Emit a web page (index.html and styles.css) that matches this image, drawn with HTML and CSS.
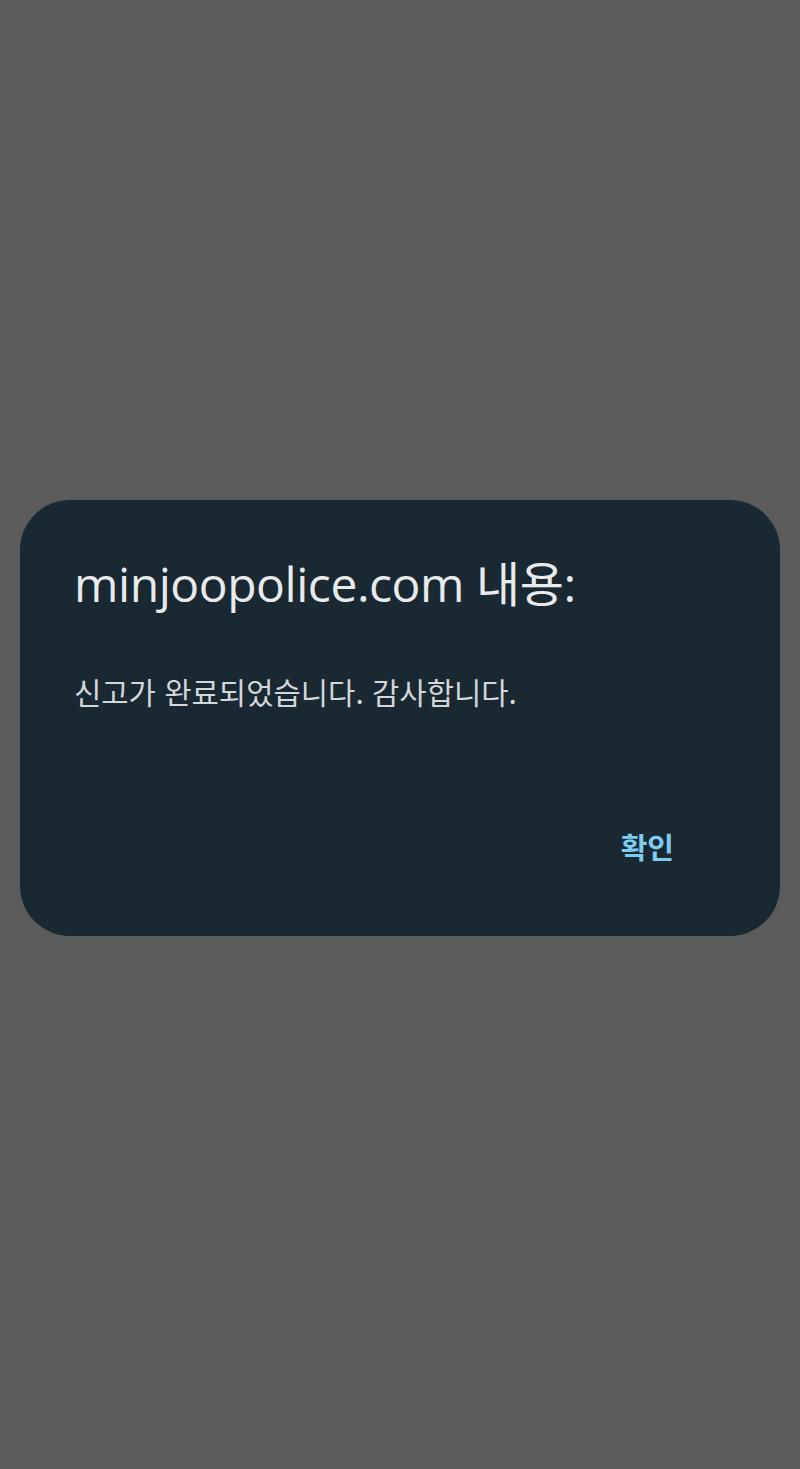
FILE: index.html
```html
<!DOCTYPE html>
<html lang="ko">
<head>
<meta charset="utf-8">
<link rel="stylesheet" href="styles.css">
</head>
<body>
<div class="screen">
  <div class="dialog">
    <h1 class="title">minjoopolice.com 내용:</h1>
    <p class="message">신고가 완료되었습니다. 감사합니다.</p>
    <div class="actions">
      <button class="ok">확인</button>
    </div>
  </div>
</div>
</body>
</html>
```
FILE: styles.css
```css
html, body {
  margin: 0;
  padding: 0;
  background: #5b5b5b;
}
.screen {
  width: 800px;
  height: 1469px;
  padding: 500px 20px 0;
  box-sizing: border-box;
}
.dialog {
  height: 436px;
  box-sizing: border-box;
  background: #1a2831;
  border-radius: 50px;
  padding: 54px 54px 0 54px;
  display: flex;
  flex-direction: column;
}
.title {
  margin: 0;
  font-family: "Open Sans", "Noto Sans CJK KR", sans-serif;
  font-weight: 400;
  font-size: 48px;
  line-height: 60px;
  color: #e8eaec;
  letter-spacing: -0.45px;
}
.message {
  margin: 58px 0 0;
  font-family: "Noto Sans CJK KR", sans-serif;
  font-size: 29.7px;
  line-height: 40px;
  color: #d3d7da;
}
.actions {
  display: flex;
  justify-content: flex-end;
  margin-top: 114px;
  padding-right: 52px;
}
.ok {
  background: none;
  border: 0;
  padding: 0;
  font-family: "Noto Sans CJK KR", sans-serif;
  font-weight: 700;
  font-size: 29px;
  line-height: 40px;
  color: #7ecbf0;
}
```
